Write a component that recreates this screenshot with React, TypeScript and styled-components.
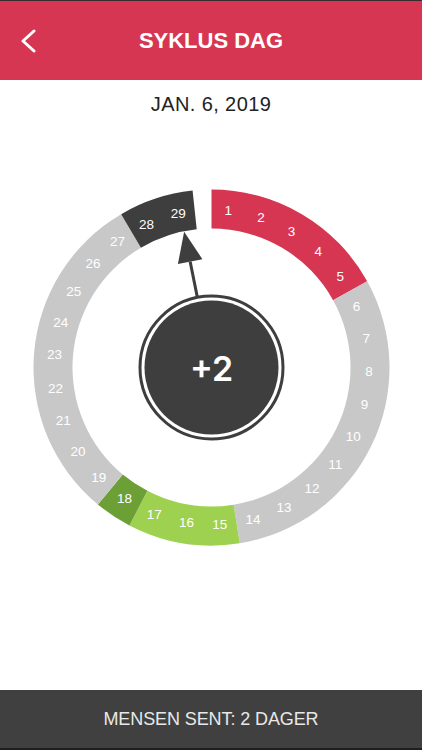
import React from "react";
import styled, { createGlobalStyle } from "styled-components";

const GlobalStyle = createGlobalStyle`
  html, body {
    margin: 0;
    padding: 0;
    background: #ffffff;
    font-family: "Liberation Sans", Arial, sans-serif;
  }
`;

const Page = styled.div`
  width: 422px;
  height: 750px;
  display: flex;
  flex-direction: column;
  overflow: hidden;
`;

const Header = styled.header`
  height: 79px;
  border-top: 1px solid #3b2a30;
  background-color: #d63652;
  display: grid;
  grid-template-columns: 60px 1fr 60px;
  align-items: center;
`;

const BackButton = styled.button`
  border: none;
  background: none;
  padding: 0 0 0 20px;
  height: 100%;
  display: flex;
  align-items: center;
  cursor: pointer;
`;

const Title = styled.h1`
  margin: 0;
  text-align: center;
  color: #ffffff;
  font-size: 22px;
  font-weight: 700;
  line-height: 24px;
`;

const DateLabel = styled.div`
  padding-top: 12px;
  text-align: center;
  font-size: 20px;
  line-height: 24px;
  letter-spacing: 0.4px;
  color: #222222;
`;

const Main = styled.main`
  flex: 1;
  display: flex;
  justify-content: center;
`;

const Footer = styled.footer`
  height: 58px;
  border-bottom: 2px solid #1e1e1e;
  background-color: #404040;
  display: flex;
  align-items: center;
  justify-content: center;
`;

const FooterText = styled.span`
  color: #e8e8e8;
  font-size: 18px;
  letter-spacing: -0.1px;
`;

const DayText = styled.text`
  fill: #ffffff;
  font-size: 13.5px;
  font-family: "Liberation Sans", Arial, sans-serif;
`;

const BigText = styled.text`
  fill: #ffffff;
  font-size: 34px;
  font-weight: 600;
  font-family: Inter, "Liberation Sans", Arial, sans-serif;
`;

// ring geometry
const CX = 211.5;
const CY = 251.5;
const R_OUT = 178;
const R_IN = 139;
const R_LABEL = 157.5;
const DAYS = 29;
const STEP = 360 / (DAYS + 0.5);

const COLORS = {
  grey: "#c8c8c8",
  red: "#d63652",
  dark: "#3e3e3e",
  green: "#9ed150",
  darkGreen: "#6d9f37",
};

const groups = [
  { from: 1, to: 5, color: COLORS.red },
  { from: 6, to: 14, color: COLORS.grey },
  { from: 15, to: 17, color: COLORS.green },
  { from: 18, to: 18, color: COLORS.darkGreen },
  { from: 19, to: 27, color: COLORS.grey },
  { from: 28, to: 29, color: COLORS.dark },
];

const pt = (deg: number, r: number) => {
  const a = (deg * Math.PI) / 180;
  return [CX + r * Math.sin(a), CY - r * Math.cos(a)];
};

const sector = (a0: number, a1: number) => {
  const [x0, y0] = pt(a0, R_OUT);
  const [x1, y1] = pt(a1, R_OUT);
  const [x2, y2] = pt(a1, R_IN);
  const [x3, y3] = pt(a0, R_IN);
  const large = a1 - a0 > 180 ? 1 : 0;
  return `M${x0} ${y0} A${R_OUT} ${R_OUT} 0 ${large} 1 ${x1} ${y1} L${x2} ${y2} A${R_IN} ${R_IN} 0 ${large} 0 ${x3} ${y3} Z`;
};

const ARROW_ANGLE = -11.4;

const CycleRing = () => {
  const [tx, ty] = pt(ARROW_ANGLE, 138.5);
  const [bx, by] = pt(ARROW_ANGLE, 108);
  const [lx, ly] = pt(ARROW_ANGLE, 72);
  const [px1, py1] = pt(ARROW_ANGLE + 90, 12.5);
  const [px2, py2] = pt(ARROW_ANGLE - 90, 12.5);
  const head = `${tx},${ty} ${bx + px1 - CX},${by + py1 - CY} ${bx + px2 - CX},${by + py2 - CY}`;

  return (
    <svg width="422" height="574" viewBox="0 0 422 574">
      {groups.map((g) => (
        <path key={g.from} d={sector((g.from - 1) * STEP, g.to * STEP)} fill={g.color} />
      ))}
      {Array.from({ length: DAYS }, (_, i) => {
        const [x, y] = pt((i + 0.5) * STEP, R_LABEL);
        return (
          <DayText key={i} x={x} y={y} textAnchor="middle" dominantBaseline="central">
            {i + 1}
          </DayText>
        );
      })}
      <line x1={lx} y1={ly} x2={bx} y2={by} stroke={COLORS.dark} strokeWidth={3} />
      <polygon points={head} fill={COLORS.dark} />
      <circle cx={CX} cy={CY} r={71.5} fill="#ffffff" stroke={COLORS.dark} strokeWidth={3} />
      <circle cx={CX} cy={CY} r={67} fill={COLORS.dark} />
      <BigText x={CX} y={CY + 1} textAnchor="middle" dominantBaseline="central">
        +2
      </BigText>
    </svg>
  );
};

export default function App() {
  return (
    <>
      <GlobalStyle />
      <Page>
        <Header>
          <BackButton aria-label="Tilbake">
            <svg width="16" height="26" viewBox="0 0 16 26">
              <polyline
                points="14,3 3,13 14,23"
                fill="none"
                stroke="#ffffff"
                strokeWidth="3"
                strokeLinecap="round"
                strokeLinejoin="round"
              />
            </svg>
          </BackButton>
          <Title>SYKLUS DAG</Title>
          <div />
        </Header>
        <DateLabel>JAN. 6, 2019</DateLabel>
        <Main>
          <CycleRing />
        </Main>
        <Footer>
          <FooterText>MENSEN SENT: 2 DAGER</FooterText>
        </Footer>
      </Page>
    </>
  );
}
